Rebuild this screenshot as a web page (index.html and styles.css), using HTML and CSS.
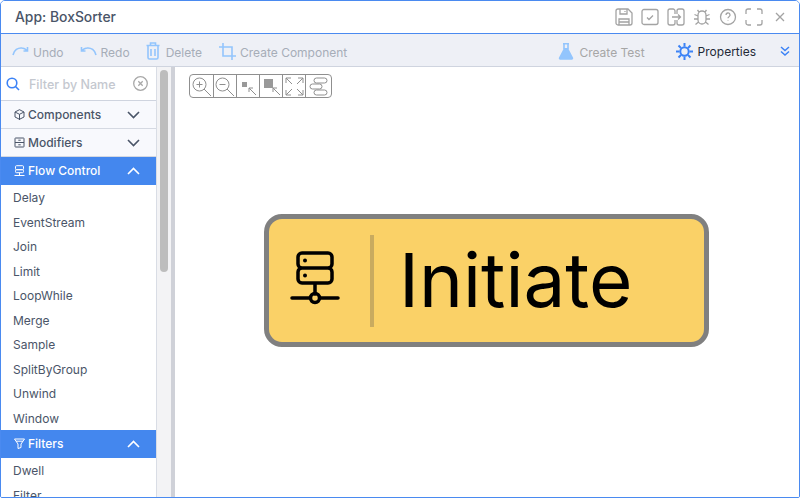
FILE: index.html
```html
<!DOCTYPE html>
<html>

<head>
    <title>App: BoxSorter</title>
    <link rel="stylesheet" href="styles.css">
</head>

<body>
    <div class="window">
        <div class="titlebar">
            <div class="title">App: BoxSorter</div>
            <div class="title-icons">
                <svg width="18" height="18" viewBox="0 0 18 18"><path d="M3 1h10l4 4v10a2 2 0 0 1-2 2H3a2 2 0 0 1-2-2V3a2 2 0 0 1 2-2zM5 1v5h7V1M10 3v1M4 17v-6h10v6M4 14h10"/></svg>
                <svg width="18" height="18" viewBox="0 0 18 18"><rect x="1" y="1.500" width="16" height="15" rx="2"/><path d="M6 9.500l2 2 4-4"/></svg>
                <svg width="18" height="18" viewBox="0 0 18 18"><path d="M8 6V3a2 2 0 0 0-2-2H3a2 2 0 0 0-2 2v12a2 2 0 0 0 2 2h3a2 2 0 0 0 2-2v-3M10 6V3a2 2 0 0 1 2-2h3a2 2 0 0 1 2 2v12a2 2 0 0 1-2 2h-3a2 2 0 0 1-2-2v-3M5 9h8.500M11 6.500l2.500 2.500-2.500 2.500"/></svg>
                <svg width="18" height="18" viewBox="0 0 18 18"><path d="M5 7a4 4 0 0 1 8 0v5a4 4 0 0 1-8 0zM6 4L4.500 2M12 4l1.500-2M5 8L1.500 6.500M13 8l3.500-1.500M5 11H1M13 11h4M5.500 14l-3 2.500M12.500 14l3 2.500"/></svg>
                <svg width="18" height="18" viewBox="0 0 18 18"><circle cx="9" cy="9" r="7.500"/><path d="M7 7a2 2 0 1 1 3 1.700c-.7.400-1 .8-1 1.500M9 12.500v.5"/></svg>
                <svg width="18" height="18" viewBox="0 0 18 18"><path d="M1 6V3a2 2 0 0 1 2-2h3M12 1h3a2 2 0 0 1 2 2v3M17 12v3a2 2 0 0 1-2 2h-3M6 17H3a2 2 0 0 1-2-2v-3"/></svg>
                <svg class="close-icon" width="10" height="10" viewBox="0 0 10 10"><path d="M1 1l8 8M9 1l-8 8"/></svg>
            </div>
        </div>

        <div class="toolbar">
            <div class="tool">
                <svg width="17" height="10" viewBox="0 0 17 10"><path d="M1 9C2 4 6 1.500 10 2c2 .2 3.500 1 5 2.500M15.500 1v4h-4"/></svg>
                Undo
            </div>
            <div class="tool">
                <svg width="17" height="10" viewBox="0 0 17 10"><path d="M16 9C15 4 11 1.500 7 2 5 2.200 3.500 3 2 4.500M1.500 1v4h4"/></svg>
                Redo
            </div>
            <div class="tool tool-delete">
                <svg width="14" height="18" viewBox="0 0 14 18"><path d="M2 4v11.500A1.500 1.500 0 0 0 3.500 17h7a1.500 1.500 0 0 0 1.500-1.500V4M.5 3.500h13M4.500 3V1h5v2M5 7v7M9 7v7"/></svg>
                Delete
            </div>
            <div class="tool">
                <svg width="17" height="17" viewBox="0 0 17 17"><path d="M4 0v13h13M0 4h13v13"/></svg>
                Create Component
            </div>
            <div class="tool tool-test">
                <svg width="16" height="17" viewBox="0 0 16 17"><path d="M5 .800h6M6 1v5M10 1v5"/><path class="flask-fill" d="M6 5h4l5 9.500a1.500 1.500 0 0 1-1.300 2.300H2.300A1.500 1.500 0 0 1 1 14.500z"/></svg>
                Create Test
            </div>
            <div class="tool tool-props">
                <svg width="17" height="17" viewBox="0 0 17 17"><circle cx="8.500" cy="8.500" r="4.200"/><path d="M8.500 0v3.500M8.500 13.500V17M0 8.500h3.500M13.500 8.500H17M2.500 2.500L5 5M12 12l2.500 2.500M14.500 2.500L12 5M5 12l-2.500 2.500"/></svg>
                Properties
            </div>
            <svg class="tool-more" width="10" height="10" viewBox="0 0 10 10"><path d="M1 1l4 3.500L9 1M1 5.500L5 9l4-3.500"/></svg>
        </div>

        <div class="main">
            <div class="sidebar">
                <div class="filter">
                    <svg class="filter-search" width="14" height="14" viewBox="0 0 14 14"><circle cx="6" cy="6" r="4.800"/><path d="M9.500 9.500L13 13"/></svg>
                    <span class="filter-text">Filter by Name</span>
                    <svg class="filter-clear" width="15" height="15" viewBox="0 0 15 15"><circle cx="7.500" cy="7.500" r="6.800"/><path d="M5.300 5.300l4.400 4.400M9.700 5.300l-4.400 4.400"/></svg>
                </div>

                <div class="group">
                    <svg width="11" height="11" viewBox="0 0 11 11"><path d="M5.500.700l4.500 2.300v5l-4.500 2.300L1 8V3zM1 3l4.500 2.300L10 3M5.500 5.300v5.700"/></svg>
                    <span class="group-name">Components</span>
                    <svg class="chevron" width="13" height="8" viewBox="0 0 13 8"><path d="M1 1l5.500 5.500L12 1"/></svg>
                </div>
                <div class="group">
                    <svg width="11" height="11" viewBox="0 0 11 11"><path d="M1.500 1h8a.5.5 0 0 1 .5.5v8a.5.5 0 0 1-.5.5h-8a.5.5 0 0 1-.5-.5v-8a.5.5 0 0 1 .5-.5zM1 5.500h9M4.300 3.200h2.400M4.300 7.800h2.400"/></svg>
                    <span class="group-name">Modifiers</span>
                    <svg class="chevron" width="13" height="8" viewBox="0 0 13 8"><path d="M1 1l5.500 5.500L12 1"/></svg>
                </div>
                <div class="group group-open">
                    <svg width="11" height="12" viewBox="0 0 11 12"><path d="M2.500.700h6a1 1 0 0 1 1 1v2a1 1 0 0 1-1 1h-6a1 1 0 0 1-1-1v-2a1 1 0 0 1 1-1zM2.500 4.700h6a1 1 0 0 1 1 1v1a1 1 0 0 1-1 1h-6a1 1 0 0 1-1-1v-1a1 1 0 0 1 1-1zM5.500 7.700V10M.5 10.500h10"/></svg>
                    <span class="group-name">Flow Control</span>
                    <svg class="chevron" width="13" height="8" viewBox="0 0 13 8"><path d="M1 7l5.500-5.500L12 7"/></svg>
                </div>
                <div class="item">Delay</div>
                <div class="item">EventStream</div>
                <div class="item">Join</div>
                <div class="item">Limit</div>
                <div class="item">LoopWhile</div>
                <div class="item">Merge</div>
                <div class="item">Sample</div>
                <div class="item">SplitByGroup</div>
                <div class="item">Unwind</div>
                <div class="item">Window</div>
                <div class="group group-open">
                    <svg width="11" height="11" viewBox="0 0 11 11"><path d="M.5 1h10L7 6v3.500L4 10.500V6zM2 3.200h7"/></svg>
                    <span class="group-name">Filters</span>
                    <svg class="chevron" width="13" height="8" viewBox="0 0 13 8"><path d="M1 7l5.500-5.500L12 7"/></svg>
                </div>
                <div class="item">Dwell</div>
                <div class="item">Filter</div>
            </div>

            <div class="scrolltrack"><div class="scrollthumb"></div></div>
            <div class="splitter"></div>

            <div class="canvas">
                <div class="zoombar">
                    <div class="zoombtn zoombtn-zoom"><svg viewBox="0 0 21 21"><circle cx="8.500" cy="8.500" r="6.500"/><path d="M13 13l7 7M5.500 8.500h6M8.500 5.500v6"/></svg></div>
                    <div class="zoombtn zoombtn-zoom"><svg viewBox="0 0 21 21"><circle cx="8.500" cy="8.500" r="6.500"/><path d="M13 13l7 7M5.500 8.500h6"/></svg></div>
                    <div class="zoombtn"><svg viewBox="0 0 21 21"><rect class="solid" x="4" y="6" width="5" height="5"/><path d="M11 12l7 7M11 12v4M11 12h4"/></svg></div>
                    <div class="zoombtn"><svg viewBox="0 0 21 21"><rect class="solid" x="3" y="3" width="9" height="9"/><path d="M12 12l7 7M12 12v4M12 12h4"/></svg></div>
                    <div class="zoombtn"><svg viewBox="0 0 21 21"><path d="M2 7V2h5M14 2h5v5M19 14v5h-5M7 19H2v-5M2 2l6 6M19 2l-6 6M19 19l-6-6M2 19l6-6"/></svg></div>
                    <div class="zoombtn zoombtn-last"><svg viewBox="0 0 21 21"><rect x="6" y="2" width="13" height="5" rx="2.500"/><rect x="2" y="8" width="12" height="5" rx="2.500"/><rect x="6" y="14" width="13" height="5" rx="2.500"/></svg></div>
                </div>

                <div class="node">
                    <svg class="node-icon" width="50" height="54" viewBox="0 0 50 54"><path d="M12 2h26a4 4 0 0 1 4 4v7a4 4 0 0 1-4 4H12a4 4 0 0 1-4-4V6a4 4 0 0 1 4-4zM12 17h26a4 4 0 0 1 4 4v7a4 4 0 0 1-4 4H12a4 4 0 0 1-4-4v-7a4 4 0 0 1 4-4zM25 32v11M2 47h18M30 47h18"/><circle cx="25" cy="47" r="4.500"/><circle class="node-dot" cx="15" cy="9.500" r="2"/><circle class="node-dot" cx="15" cy="24.500" r="2"/></svg>
                    <div class="node-divider"></div>
                    <div class="node-label">Initiate</div>
                </div>
            </div>
        </div>
    </div>
</body>

</html>
```

FILE: styles.css
```css
html,
body {
    margin: 0;
    height: 100%;
    background-color: #fff;
    overflow: hidden;
}

body {
    font-family: Inter, "Liberation Sans", sans-serif;
}

svg {
    display: block;
    flex: none;
    fill: none;
    stroke: currentColor;
    stroke-width: 1.3;
}

.window {
    box-sizing: border-box;
    width: 800px;
    height: 498px;
    display: flex;
    flex-direction: column;
    border: 1px solid #4a8af0;
    border-radius: 5px 5px 2px 2px;
    overflow: hidden;
}

.titlebar {
    box-sizing: border-box;
    height: 33px;
    flex: none;
    display: flex;
    align-items: center;
    justify-content: space-between;
    padding: 0 14px;
    border-bottom: 1px solid #4a8af0;
    background-color: #fff;
}

.title {
    font-size: 13.900px;
    font-weight: 500;
    color: #4a5568;
}

.title-icons {
    display: flex;
    align-items: center;
    gap: 8px;
    color: #a3a3a3;
}

.close-icon {
    margin-left: 4px;
}

.toolbar {
    box-sizing: border-box;
    height: 33px;
    flex: none;
    display: flex;
    align-items: center;
    padding: 5px 9px 0 11px;
    background-color: #eef0f6;
    border-bottom: 1px solid #cfd4df;
}

.tool {
    display: flex;
    align-items: center;
    gap: 4px;
    margin-right: 16px;
    font-size: 12px;
    color: #a6adb8;
}

.tool svg {
    margin-bottom: 3px;
    color: #93c5fd;
    stroke-width: 1.6;
}

.tool-delete {
    gap: 6px;
    margin-right: 17px;
}

.tool-test {
    gap: 5px;
    margin-left: auto;
    margin-right: 31px;
    color: #a6a6a6;
}

.flask-fill {
    fill: #93c5fd;
    stroke: none;
}

.tool-props {
    margin-right: 24px;
    margin-bottom: 2px;
    gap: 5px;
    color: #1f2937;
}

.tool-props svg {
    margin-bottom: 0;
    color: #3b82f6;
    stroke-width: 2;
}

.tool-more {
    margin-bottom: 3px;
    color: #3b82f6;
    stroke-width: 1.5;
}

.main {
    flex: 1;
    min-height: 0;
    display: flex;
}

.sidebar {
    width: 156px;
    flex: none;
    box-sizing: border-box;
    border-right: 1px solid #d9dde5;
    overflow: hidden;
    background-color: #fff;
}

.filter {
    box-sizing: border-box;
    height: 34px;
    display: flex;
    align-items: center;
    padding: 0 8px 0 5px;
    border-bottom: 1px solid #cfd4df;
}

.filter-search {
    color: #3b82f6;
    stroke-width: 1.6;
}

.filter-text {
    flex: 1;
    margin-left: 9px;
    padding-top: 2px;
    font-size: 12.500px;
    font-weight: 500;
    color: #c4c8cf;
}

.filter-clear {
    color: #a8a8a8;
}

.group {
    box-sizing: border-box;
    height: 28px;
    display: flex;
    align-items: center;
    gap: 3px;
    padding: 0 16px 0 13px;
    border-bottom: 1px solid #d5d9e2;
    background-color: #f8f9fd;
    font-size: 12px;
    font-weight: 500;
    color: #4a5568;
}

.group svg {
    stroke-width: 1;
}

.group-name {
    flex: 1;
}

.group-open {
    padding-bottom: 1px;
    background-color: #4487ee;
    border-bottom: none;
    color: #fff;
}

.group .chevron {
    stroke-width: 1.6;
}

.item {
    height: 24.500px;
    line-height: 26px;
    padding-left: 12px;
    font-size: 12px;
    color: #4a5568;
}

.scrolltrack {
    width: 14px;
    flex: none;
    background-color: #f3f3f5;
    padding: 3px 0 0 3px;
    box-sizing: border-box;
}

.scrollthumb {
    width: 8px;
    height: 202px;
    border-radius: 4px;
    background-color: #bdbdbd;
}

.splitter {
    width: 4px;
    flex: none;
    background-color: #cfd1d8;
}

.canvas {
    flex: 1;
    position: relative;
    display: flex;
    align-items: center;
    justify-content: center;
    background-color: #fff;
}

.zoombar {
    position: absolute;
    left: 14px;
    top: 7px;
    display: flex;
    height: 24px;
    border: 1px solid #8f8f8f;
    border-radius: 4px;
    box-sizing: border-box;
    overflow: hidden;
    background-color: #fff;
}

.zoombtn {
    box-sizing: border-box;
    width: 23px;
    display: flex;
    align-items: center;
    justify-content: center;
    border-right: 1px solid #8f8f8f;
    color: #8f8f8f;
}

.zoombtn svg {
    width: 21px;
    height: 21px;
    stroke-width: 1;
}

.zoombtn-zoom {
    width: 23.500px;
}

.zoombtn-last {
    width: 25px;
    border-right: none;
}

.solid {
    fill: #999;
    stroke: none;
}

.node {
    box-sizing: border-box;
    width: 445px;
    height: 133px;
    margin-top: -3px;
    margin-left: -1px;
    display: flex;
    align-items: center;
    padding-left: 21px;
    background-color: #fad167;
    border: 5px solid #808080;
    border-radius: 18px;
}

.node-icon {
    margin-bottom: 6px;
    color: #000;
    stroke-width: 3.500;
    stroke-linecap: round;
}

.node-dot {
    fill: #000;
    stroke: none;
}

.node-divider {
    width: 4px;
    height: 92px;
    margin-left: 30px;
    background-color: #c9ab5f;
}

.node-label {
    margin-left: 25px;
    padding-bottom: 2px;
    font-size: 74.500px;
    color: #000;
}
```
